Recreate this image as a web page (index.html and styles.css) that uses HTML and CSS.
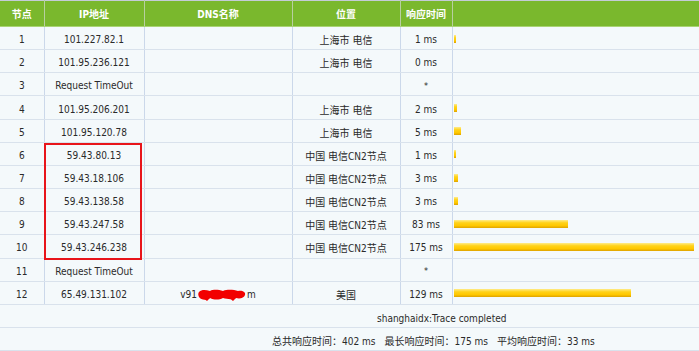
FILE: index.html
```html
<!DOCTYPE html>
<html lang="zh-CN">
<head>
<meta charset="utf-8">
<title>Traceroute</title>
<link rel="stylesheet" href="styles.css">
</head>
<body>
<div class="wrap">
  <table class="trace">
    <colgroup>
      <col class="c-no"><col class="c-ip"><col class="c-dns"><col class="c-loc"><col class="c-time"><col class="c-bar">
    </colgroup>
    <thead>
      <tr><th>节点</th><th>IP地址</th><th>DNS名称</th><th>位置</th><th>响应时间</th><th></th></tr>
    </thead>
    <tbody>
      <tr><td>1</td><td>101.227.82.1</td><td></td><td>上海市 电信</td><td>1 ms</td><td class="bar-cell"><div class="bar" style="width:2px"></div></td></tr>
      <tr><td>2</td><td>101.95.236.121</td><td></td><td>上海市 电信</td><td>0 ms</td><td class="bar-cell"></td></tr>
      <tr><td>3</td><td>Request TimeOut</td><td></td><td></td><td class="star">*</td><td class="bar-cell"></td></tr>
      <tr><td>4</td><td>101.95.206.201</td><td></td><td>上海市 电信</td><td>2 ms</td><td class="bar-cell"><div class="bar" style="width:3px"></div></td></tr>
      <tr><td>5</td><td>101.95.120.78</td><td></td><td>上海市 电信</td><td>5 ms</td><td class="bar-cell"><div class="bar" style="width:7px"></div></td></tr>
      <tr><td>6</td><td>59.43.80.13</td><td></td><td>中国 电信CN2节点</td><td>1 ms</td><td class="bar-cell"><div class="bar" style="width:2px"></div></td></tr>
      <tr><td>7</td><td>59.43.18.106</td><td></td><td>中国 电信CN2节点</td><td>3 ms</td><td class="bar-cell"><div class="bar" style="width:4px"></div></td></tr>
      <tr><td>8</td><td>59.43.138.58</td><td></td><td>中国 电信CN2节点</td><td>3 ms</td><td class="bar-cell"><div class="bar" style="width:4px"></div></td></tr>
      <tr><td>9</td><td>59.43.247.58</td><td></td><td>中国 电信CN2节点</td><td>83 ms</td><td class="bar-cell"><div class="bar" style="width:114px"></div></td></tr>
      <tr><td>10</td><td>59.43.246.238</td><td></td><td>中国 电信CN2节点</td><td>175 ms</td><td class="bar-cell"><div class="bar" style="width:240px"></div></td></tr>
      <tr><td>11</td><td>Request TimeOut</td><td></td><td></td><td class="star">*</td><td class="bar-cell"></td></tr>
      <tr><td>12</td><td>65.49.131.102</td><td>v91<svg class="redact" width="48" height="13" viewBox="0 0 48 13"><path d="M1 4 C4 1 8 2 12 3 C16 1 21 2 25 3 C30 1 36 2 40 3 C44 2 48 4 47 7 C46 10 42 11 38 10 C34 12 29 11 25 10 C21 12 16 12 12 10 C8 13 3 12 1 9 C0 7 0 5 1 4 Z" fill="#f20000"/><path d="M4 9 L9 13 L13 9 Z" fill="#f20000"/><path d="M30 9 L35 13 L39 9 Z" fill="#f20000"/></svg>m</td><td>美国</td><td>129 ms</td><td class="bar-cell"><div class="bar" style="width:177px"></div></td></tr>
    </tbody>
    <tfoot>
      <tr><td colspan="6" class="status">shanghaidx:Trace completed</td></tr>
      <tr><td colspan="6" class="summary"><span class="stat">总共响应时间：402 ms</span><span class="stat">最长响应时间：175 ms</span><span class="stat">平均响应时间：<span class="val">33 ms</span></span></td></tr>
    </tfoot>
  </table>
  <div class="highlight"></div>
</div>
</body>
</html>
```

FILE: styles.css
```css
html, body {
  margin: 0;
  padding: 0;
  background: #f4f9fb;
}
.wrap {
  position: relative;
  width: 699px;
  height: 351px;
  overflow: hidden;
}
.trace {
  width: 699px;
  border-collapse: collapse;
  table-layout: fixed;
  font-family: "DejaVu Sans Condensed", "DejaVu Sans", "Noto Sans CJK SC", sans-serif;
  font-stretch: condensed;
  font-size: 10px;
  color: #2a2a2a;
  border-top: 1px solid #c4ccd6;
}
.c-no { width: 44px; }
.c-ip { width: 100px; }
.c-dns { width: 148px; }
.c-loc { width: 108px; }
.c-time { width: 52px; }
.c-bar { width: 247px; }

.trace th {
  background: #7ab82d;
  color: #fff;
  font-weight: bold;
  height: 25px;
  padding: 0;
  text-align: center;
  border-left: 1px solid #b8cfa0;
  border-bottom: 1px solid #a9d474;
}
.trace th:first-child { border-left: none; }

.trace td {
  height: 19.17px;
  padding: 3px 0 0;
  text-align: center;
  vertical-align: middle;
  border-left: 1px solid #cbd8ea;
  border-bottom: 1px solid #d9e2ec;
  white-space: nowrap;
}
.trace td:first-child { border-left: none; }
.trace td.star { font-size: 9px; }
.trace td.bar-cell {
  text-align: left;
  padding: 0 0 0 1px;
  height: 22.17px;
}
.bar {
  height: 8px;
  margin-top: 1px;
  background: linear-gradient(#ffec8a 0%, #ffd21a 35%, #ffc800 70%, #dea300 100%);
}
.redact {
  vertical-align: middle;
  margin: 0 1px 0 1px;
}
.trace tfoot td {
  text-align: left;
  border-left: none;
}
.trace td.status {
  padding: 6px 0 0 377px;
  height: 16.17px;
}
.trace td.summary { padding-left: 272px; }
.stat { margin-right: 9px; }
.val { margin-left: 0; }

.highlight {
  position: absolute;
  left: 44px;
  top: 143px;
  width: 94px;
  height: 113px;
  border: 2px solid #e8141a;
}
```
